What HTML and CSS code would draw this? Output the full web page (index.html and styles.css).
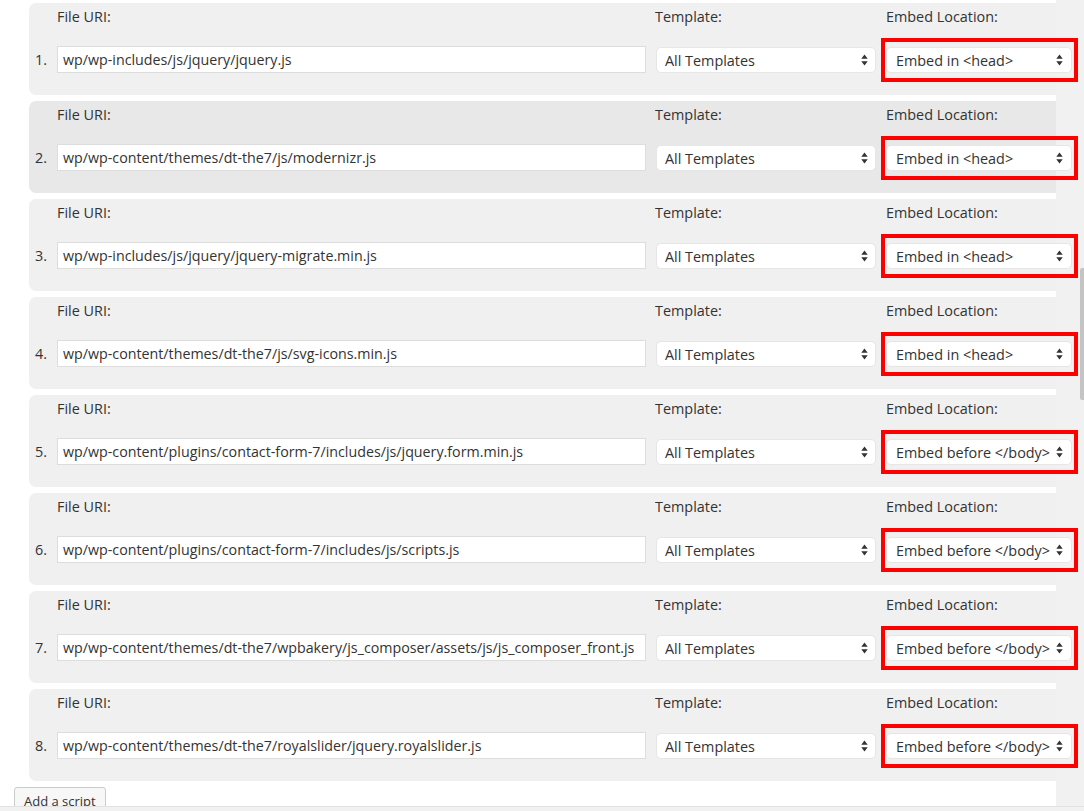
FILE: index.html
```html
<!DOCTYPE html>
<html lang="en">
<head>
    <meta charset="UTF-8">
    <title>Scripts</title>
    <link rel="stylesheet" href="styles.css">
</head>
<body>

<div class="panel">
    <p class="intro">Order the scripts exactly as you want them to load: jQuery first, then anything that depends on it.</p>

    <div id="scriptList" class="script-list">
        <!-- rows are built below -->
    </div>

    <button class="add-btn">Add a script</button>
</div>

<div class="footer-strip"></div>
<div class="scroll-thumb"></div>

<script>
    const scripts = [
        { uri: 'wp/wp-includes/js/jquery/jquery.js', where: 'Embed in <head>' },
        { uri: 'wp/wp-content/themes/dt-the7/js/modernizr.js', where: 'Embed in <head>', hover: true },
        { uri: 'wp/wp-includes/js/jquery/jquery-migrate.min.js', where: 'Embed in <head>' },
        { uri: 'wp/wp-content/themes/dt-the7/js/svg-icons.min.js', where: 'Embed in <head>' },
        { uri: 'wp/wp-content/plugins/contact-form-7/includes/js/jquery.form.min.js', where: 'Embed before </body>' },
        { uri: 'wp/wp-content/plugins/contact-form-7/includes/js/scripts.js', where: 'Embed before </body>' },
        { uri: 'wp/wp-content/themes/dt-the7/wpbakery/js_composer/assets/js/js_composer_front.js', where: 'Embed before </body>' },
        { uri: 'wp/wp-content/themes/dt-the7/royalslider/jquery.royalslider.js', where: 'Embed before </body>' }
    ];

    const arrows = `<svg class="arrows" width="7" height="12" viewBox="0 0 7 12"><path d="M3.5 0.5 L6.7 4.8 H0.3 Z M3.5 11.5 L6.7 7.2 H0.3 Z" fill="#333"/></svg>`;

    function escapeHtml(text) {
        return text.replace(/&/g, '&amp;').replace(/</g, '&lt;').replace(/>/g, '&gt;');
    }

    const list = document.getElementById('scriptList');

    scripts.forEach((item, i) => {
        const row = document.createElement('div');
        row.className = item.hover ? 'script-row hover' : 'script-row';
        row.innerHTML = `
            <span></span>
            <label class="field-label">File URI:</label>
            <label class="field-label">Template:</label>
            <label class="field-label">Embed Location:</label>
            <span class="num">${i + 1}.</span>
            <input type="text" class="uri-input" value="${item.uri}">
            <div class="fake-select">
                <span>All Templates</span>${arrows}
            </div>
            <div class="fake-select location">
                <span>${escapeHtml(item.where)}</span>${arrows}
                <span class="mark"></span>
            </div>
        `;
        list.appendChild(row);
    });
</script>

</body>
</html>
```

FILE: styles.css
```css
body {
    margin: 0;
    background-color: #f1f1f1;
    color: #333;
    font-family: 'Open Sans', 'Liberation Sans', sans-serif;
    font-size: 14px;
    overflow: hidden;
}
.panel {
    width: 1056px;
    height: 807px;
    box-sizing: border-box;
    padding-top: 1px;
    background-color: #fff;
}
.intro {
    margin: -19px 0 0 60px;
    line-height: 18px;
    font-size: 14px;
    color: #444;
}
.script-list {
    padding-top: 3px;
}
.script-row {
    display: grid;
    grid-template-columns: 12px 589px 220px 186px;
    grid-template-rows: 20px 27px;
    column-gap: 10px;
    row-gap: 19px;
    width: 1027px;
    box-sizing: border-box;
    margin-left: 29px;
    margin-bottom: 6px;
    padding: 4px 0 22px 6px;
    background-color: #f0f0f0;
    border-radius: 7px 0 0 7px;
}
.script-row.hover {
    background-color: #e8e8e8;
}
.script-row > :nth-child(3) {
    margin-left: -1px;
}
.field-label {
    line-height: 20px;
    font-size: 14.4px;
    color: #333;
}
.num {
    line-height: 27px;
    font-size: 14.4px;
    color: #333;
}
.uri-input {
    height: 27px;
    box-sizing: border-box;
    margin: 0;
    padding: 0 5px;
    border: 1px solid #ddd;
    border-radius: 0;
    background-color: #fff;
    color: #333;
    font-family: 'Open Sans', 'Liberation Sans', sans-serif;
    font-size: 14.25px;
    outline: none;
}
.fake-select {
    position: relative;
    display: flex;
    align-items: center;
    justify-content: space-between;
    height: 26px;
    margin-top: 1px;
    padding: 0 7px 0 8px;
    background-color: #fff;
    border: 1px solid #e6e6e6;
    border-radius: 5px;
    box-sizing: border-box;
    font-size: 14.4px;
    color: #333;
}
.fake-select.location {
    padding-left: 9px;
    padding-right: 8px;
}
.arrows {
    display: block;
}
.mark {
    position: absolute;
    left: -6px;
    right: -7px;
    top: -10px;
    bottom: -10px;
    border: 4px solid #f00;
    pointer-events: none;
}
.add-btn {
    display: block;
    margin: 2px 0 0 14px;
    padding: 2px 9px;
    background-color: #f7f7f7;
    border: 1px solid #ccc;
    border-radius: 3px;
    color: #333;
    font-family: 'Open Sans', 'Liberation Sans', sans-serif;
    font-size: 13px;
    line-height: 22px;
}
.footer-strip {
    position: fixed;
    left: 0;
    right: 0;
    bottom: 0;
    height: 4px;
    background-color: #f1f1f1;
    border-top: 1px solid #e2e2e2;
}
.scroll-thumb {
    position: fixed;
    right: 0;
    top: 268px;
    width: 4px;
    height: 132px;
    background-color: #c4c4c4;
    border-radius: 2px 0 0 2px;
}
```
